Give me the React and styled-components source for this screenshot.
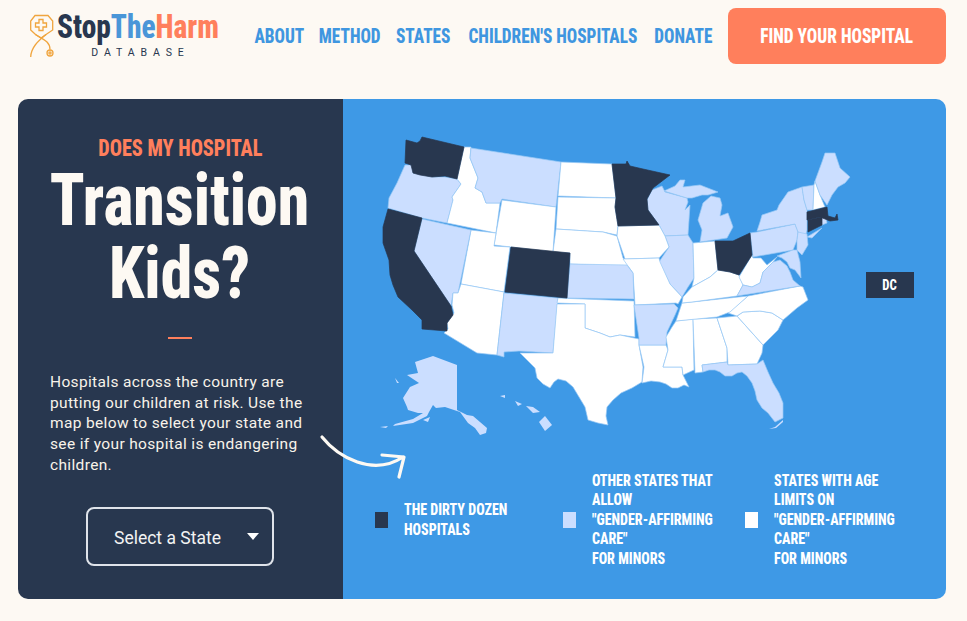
import React from "react";
import styled, { createGlobalStyle } from "styled-components";

const NARROW = `"Roboto Condensed", "Liberation Sans Narrow", "DejaVu Sans Condensed", sans-serif`;
const BODY = `Roboto, "Noto Sans", sans-serif`;
const NAVY = "#28374f";
const BLUE = "#3e99e6";
const LIGHT = "#cbdeff";
const CORAL = "#ff7f5c";
const CREAM = "#fdf9f3";
const BORDER = "#98c9f5";

const Global = createGlobalStyle`
  html, body { margin: 0; padding: 0; background: ${CREAM}; }
  body { width: 967px; height: 621px; overflow: hidden; font-family: ${BODY}; }
`;

const Page = styled.div`
  display: flex;
  flex-direction: column;
  padding: 8px 21px 0 18px;
`;
const Header = styled.header`
  display: flex;
  align-items: center;
  justify-content: space-between;
  height: 56px;
  padding-left: 11px;
`;
const Logo = styled.div`
  display: flex;
  align-items: flex-start;
  align-self: flex-start;
  margin-top: 6px;
`;
const LogoIcon = styled.svg`
  width: 28px;
  height: 44px;
  flex: none;
  fill: none;
  stroke: #f0a53e;
  stroke-width: 1.3;
`;
const LogoText = styled.div`
  display: flex;
  flex-direction: column;
  align-items: center;
  width: 163px;
  margin: -3px 0 0 -1px;
`;
const Wordmark = styled.div`
  font-family: ${NARROW};
  font-weight: 800;
  font-size: 33px;
  line-height: 32px;
  white-space: nowrap;
  transform: scaleX(0.89);
`;
const Mark = styled.span`
  color: ${(p) => p.$c};
`;
const Sub = styled.div`
  font-family: ${BODY};
  font-size: 10.5px;
  line-height: 12px;
  letter-spacing: 5.9px;
  margin: 4px -6px 0 0;
  color: ${NAVY};
`;
const Nav = styled.nav`
  display: flex;
  align-items: center;
  gap: 16px;
`;
const NavLink = styled.a`
  display: flex;
  justify-content: center;
  width: ${(p) => p.$w}px;
`;
const NavLabel = styled.span`
  font-family: ${NARROW};
  font-weight: 800;
  font-size: 21px;
  color: #3f96e0;
  white-space: nowrap;
  transform: scaleX(0.82);
`;
const Cta = styled.a`
  display: flex;
  align-items: center;
  justify-content: center;
  width: 218px;
  height: 56px;
  border-radius: 8px;
  background: ${CORAL};
`;
const CtaLabel = styled.span`
  color: #fff;
  font-family: ${NARROW};
  font-weight: 800;
  font-size: 21px;
  white-space: nowrap;
  transform: scaleX(0.825);
`;
const Panel = styled.main`
  display: flex;
  margin-top: 35px;
  height: 500px;
  border-radius: 10px;
  overflow: hidden;
  position: relative;
`;
const Side = styled.section`
  width: 325px;
  flex: none;
  box-sizing: border-box;
  background: ${NAVY};
  display: flex;
  flex-direction: column;
  align-items: center;
  padding: 35px 1px 0 0;
`;
const Kicker = styled.div`
  font-family: ${NARROW};
  font-weight: 800;
  font-size: 23.5px;
  line-height: 28px;
  color: ${CORAL};
  transform: scaleX(0.86);
`;
const Title = styled.h1`
  margin: 2px 0 0;
  font-family: ${NARROW};
  font-weight: 800;
  font-size: 72px;
  line-height: 73px;
  color: #fdf9f3;
  text-align: center;
  transform: scaleX(0.885);
`;
const Rule = styled.div`
  width: 24px;
  height: 2px;
  margin-top: 27px;
  background: ${CORAL};
`;
const Lead = styled.p`
  margin: 33px 0 0;
  padding: 0 31px 0 32px;
  align-self: stretch;
  font-size: 15.5px;
  line-height: 20.7px;
  letter-spacing: 0.35px;
  color: #f8f3ea;
`;
const Select = styled.div`
  display: flex;
  align-items: center;
  justify-content: space-between;
  box-sizing: border-box;
  width: 188px;
  height: 59px;
  margin-top: 31px;
  padding: 3px 13px 0 26px;
  border: 2px solid #dfe3ea;
  border-radius: 8px;
  color: #f3f3f3;
  font-size: 17.5px;
`;
const Caret = styled.span`
  width: 0;
  height: 0;
  border-left: 6px solid transparent;
  border-right: 6px solid transparent;
  border-top: 7px solid #fff;
  margin-top: -3px;
`;
const Stage = styled.section`
  flex: 1;
  background: ${BLUE};
  padding: 31px 0 0 27px;
  display: flex;
  flex-direction: column;
`;
const MapBox = styled.div`
  position: relative;
  height: 310px;
`;
const UsMap = styled.svg`
  display: block;
  width: 490px;
  height: 310px;
`;
const DcBadge = styled.div`
  position: absolute;
  left: 496px;
  top: 142px;
  width: 48px;
  height: 26px;
  background: ${NAVY};
  display: flex;
  align-items: center;
  justify-content: center;
`;
const DcLabel = styled.span`
  color: #fff;
  font-family: ${NARROW};
  font-weight: 800;
  font-size: 15px;
  transform: scaleX(0.85);
`;
const Legend = styled.div`
  display: flex;
  align-items: center;
  margin-top: 32px;
  padding-left: 5px;
  height: 95px;
`;
const LegendItem = styled.div`
  display: flex;
  align-items: center;
  width: ${(p) => p.$w}px;
  flex: none;
`;
const Swatch = styled.span`
  width: 13px;
  height: 16px;
  flex: none;
  margin-right: 16px;
  background: ${(p) => p.$c};
`;
const LegendText = styled.div`
  font-family: ${NARROW};
  font-weight: 800;
  font-size: 16px;
  line-height: 19.4px;
  white-space: nowrap;
  color: #fff;
  transform: scaleX(0.875);
  transform-origin: left center;
`;
const Arrow = styled.svg`
  position: absolute;
  left: 300px;
  top: 335px;
  width: 90px;
  height: 50px;
  overflow: visible;
  fill: none;
  stroke: #fdf9f3;
  stroke-width: 3.2;
  stroke-linecap: round;
  stroke-linejoin: round;
`;

const STATES = [
  ["M405 165L412 165L413 173L432 177L445 177L457 179L461 184L452 197L453 200L447 223L422 218L388 208L389 198L397 183Z", LIGHT],
  ["M464 147L471 147L470 158L478 178L475 188L482 192L486 203L500 203L496 233L447 223L453 200L452 197L461 184L457 179Z", "#fff"],
  ["M471 148L561 162L556 207L502 199L500 203L486 203L482 192L475 188L478 178L470 158Z", LIGHT],
  ["M502 200L556 207L553 252L494 245Z", "#fff"],
  ["M561 162L612 164L616 198L558 196Z", "#fff"],
  ["M558 197L616 198L615 207L618 226L617 235L603 232L556 229Z", "#fff"],
  ["M556 229L603 232L617 236L623 258L630 267L570 264L570 253L553 252Z", "#fff"],
  ["M652 190L662 186L665 192L687 198L688 202L685 210L690 205L688 235L665 236L659 225L648 210L647 200Z", LIGHT],
  ["M664 191L675 186L680 180L685 180L683 187L700 185L718 192L708 195L702 195L692 198L687 198Z", LIGHT],
  ["M711 196L720 198L722 205L720 216L728 213L733 227L727 238L700 242L702 230L698 220L703 203Z", LIGHT],
  ["M665 236L688 235L693 243L694 278L688 287L682 297L670 284L659 262L669 247Z", LIGHT],
  ["M693 243L715 241L718 270L710 277L692 287L694 278Z", "#fff"],
  ["M618 226L659 225L665 236L669 247L659 258L625 259L617 236Z", "#fff"],
  ["M623 259L659 258L660 262L670 284L682 297L678 304L676 303L635 305L633 273Z", "#fff"],
  ["M570 264L627 265L633 273L634 299L567 298Z", LIGHT],
  ["M471 230L496 233L494 246L510 247L504 292L461 284Z", "#fff"],
  ["M422 219L471 230L458 293L453 293L451 306L414 251Z", LIGHT],
  ["M461 284L504 292L497 355L477 353L444 333L448 329L447 323L454 313L452 305L453 293L458 293Z", "#fff"],
  ["M504 293L558 298L553 353L519 351L504 352L504 357L497 355Z", LIGHT],
  ["M558 298L634 301L635 337L620 335L610 337L600 333L585 328L585 304L557 303Z", "#fff"],
  ["M557 304L585 304L585 328L600 333L610 337L620 335L639 339L639 345L643 367L642 382L632 388L621 393L613 400L607 407L606 416L608 425L598 423L588 420L585 407L579 397L573 387L566 381L558 379L554 382L550 388L543 384L537 378L535 368L527 360L520 353L553 353Z", "#fff"],
  ["M639 345L666 345L668 350L663 367L682 367L683 375L689 387L684 385L678 388L672 388L666 384L660 382L651 381L642 383L644 367Z", "#fff"],
  ["M634 305L674 304L678 308L675 315L667 332L666 345L639 345L639 338Z", LIGHT],
  ["M676 321L693 319L694 370L683 375L682 367L663 367L668 350L666 337L672 327Z", "#fff"],
  ["M693 319L717 318L727 348L727 362L702 365L703 372L695 373Z", "#fff"],
  ["M717 318L737 316L763 345L762 353L757 364L728 365L727 348Z", "#fff"],
  ["M737 316L743 312L760 311L772 313L783 320L778 330L763 345Z", "#fff"],
  ["M800 286L803 287L808 300L797 308L783 320L772 313L760 311L743 312L737 316L728 313L748 296Z", "#fff"],
  ["M692 302L748 296L730 312L717 317L676 321L682 303Z", "#fff"],
  ["M692 287L710 277L718 270L730 272L739 275L743 285L737 296L692 302L682 303L683 297Z", "#fff"],
  ["M752 255L753 258L761 258L767 265L777 257L773 262L763 272L760 283L752 287L743 285L739 277Z", "#fff"],
  ["M737 296L743 285L752 287L760 283L763 272L773 262L780 260L787 266L790 272L793 280L800 286Z", LIGHT],
  ["M750 233L757 232L795 224L798 232L797 240L793 250L753 257Z", LIGHT],
  ["M757 231L760 222L762 215L777 210L779 205L788 192L802 187L804 200L807 210L807 230L805 238L798 232L795 224Z", LIGHT],
  ["M807 237L822 228L812 238Z", LIGHT],
  ["M798 232L807 234L808 245L802 255L797 250L797 240Z", LIGHT],
  ["M777 256L793 250L797 250L800 262L801 278L795 270L790 268L787 262L782 258Z", LIGHT],
  ["M802 187L814 185L813 210L807 210L804 200Z", LIGHT],
  ["M815 181L820 195L825 207L813 210L814 185Z", "#fff"],
  ["M815 181L822 162L825 153L835 153L840 168L850 177L845 183L838 187L832 195L827 205L820 195Z", LIGHT],
  ["M821 217L826 218L827 223L822 225Z", LIGHT],
  ["M702 365L727 362L728 365L757 364L763 360L768 372L773 383L779 393L783 403L783 418L775 422L768 413L762 408L757 400L755 391L752 383L747 376L742 372L737 373L732 376L725 376L720 372L715 370L709 370L703 372Z", LIGHT],
  ["M406 140L417 143L420 141L422 137L464 147L457 179L445 176L432 177L420 175L413 173L411 165L405 163Z", NAVY],
  ["M612 164L626 164L627 161L630 166L643 169L670 175L653 188L647 199L648 210L659 225L618 226L615 207L616 198Z", NAVY],
  ["M715 241L733 241L750 233L752 255L739 275L730 272L718 270Z", NAVY],
  ["M511 247L570 253L567 298L505 292Z", NAVY],
  ["M388 209L422 218L414 251L451 306L453 315L447 323L447 331L422 329L422 320L412 310L398 297L393 285L390 275L389 260L383 243L383 227Z", NAVY],
  ["M807 212L827 207L828 216L835 218L837 214L838 220L830 221L820 217L807 220Z", NAVY],
  ["M808 220L822 217L822 225L808 232Z", NAVY],
];

const ISLANDS = [
  "M415 362L433 356L457 365L457 410L467 415L473 416L487 428L486 433L480 435L475 428L468 423L460 412L445 407L436 408L433 405L429 412L427 416L413 423L393 426L395 424L413 419L423 413L418 413L408 410L407 407L403 398L410 387L419 383L407 375L418 373Z",
  "M380 427L388 426L386 428Z",
  "M423 420L430 417L428 422Z",
  "M395 378L399 383L397 383Z",
  "M539 422L545 416L552 425L545 431Z",
  "M526 406L533 407L540 412L533 413Z",
  "M515 401L522 404L518 406Z",
  "M500 396L505 395L505 398Z",
  "M769 429L775 427L783 420L783 422L776 428Z",
];

function Logomark() {
  return (
    <LogoIcon viewBox="29 14 28 44">
      <path d="M35 15.5H48L52.7 21V30L46 34.5L41 38L35.5 34.5L30.7 30V21Z" />
      <path d="M39 19.5H43V23H46.5V27H43V30.5H39V27H35.5V23H39Z" />
      <path d="M46 34.5C41 39 31 46 30.7 57" />
      <path d="M35.5 34.5C42 39 50 41 50 49.5" />
      <circle cx="50" cy="53" r="3" />
      <circle cx="50" cy="53" r="1.1" />
    </LogoIcon>
  );
}

const NAV_ITEMS = [
  ["ABOUT", 50],
  ["METHOD", 60],
  ["STATES", 55],
  ["CHILDREN'S HOSPITALS", 171],
  ["DONATE", 58],
];

export default function App() {
  return (
    <>
      <Global />
      <Page>
        <Header>
          <Logo>
            <Logomark />
            <LogoText>
              <Wordmark>
                <Mark $c={NAVY}>Stop</Mark>
                <Mark $c="#4a96d8">The</Mark>
                <Mark $c={CORAL}>Harm</Mark>
              </Wordmark>
              <Sub>DATABASE</Sub>
            </LogoText>
          </Logo>
          <Nav>
            {NAV_ITEMS.map(([t, w]) => (
              <NavLink key={t} $w={w}><NavLabel>{t}</NavLabel></NavLink>
            ))}
            <Cta><CtaLabel>FIND YOUR HOSPITAL</CtaLabel></Cta>
          </Nav>
        </Header>
        <Panel>
          <Side>
            <Kicker>DOES MY HOSPITAL</Kicker>
            <Title>Transition<br />Kids?</Title>
            <Rule />
            <Lead>
              Hospitals across the country are putting our children at risk. Use the map below to select your state and see if your hospital is endangering children.
            </Lead>
            <Select>
              Select a State
              <Caret />
            </Select>
          </Side>
          <Stage>
            <MapBox>
              <UsMap viewBox="370 130 490 310">
                {STATES.map(([d, c], i) => (
                  <path key={i} d={d} fill={c} stroke={c === NAVY ? NAVY : BORDER} strokeWidth="0.7" strokeLinejoin="round" />
                ))}
                {ISLANDS.map((d, i) => (
                  <path key={i} d={d} fill={LIGHT} />
                ))}
              </UsMap>
              <DcBadge><DcLabel>DC</DcLabel></DcBadge>
            </MapBox>
            <Legend>
              <LegendItem $w={188}>
                <Swatch $c={NAVY} />
                <LegendText>THE DIRTY DOZEN<br />HOSPITALS</LegendText>
              </LegendItem>
              <LegendItem $w={182}>
                <Swatch $c={LIGHT} />
                <LegendText>OTHER STATES THAT<br />ALLOW<br />"GENDER-AFFIRMING<br />CARE"<br />FOR MINORS</LegendText>
              </LegendItem>
              <LegendItem $w={170}>
                <Swatch $c="#fff" />
                <LegendText>STATES WITH AGE<br />LIMITS ON<br />"GENDER-AFFIRMING<br />CARE"<br />FOR MINORS</LegendText>
              </LegendItem>
            </Legend>
          </Stage>
          <Arrow viewBox="300 335 90 50">
            <path d="M304 338C320 358 355 378 385 358M364 356L386 358L381 378" />
          </Arrow>
        </Panel>
      </Page>
    </>
  );
}
